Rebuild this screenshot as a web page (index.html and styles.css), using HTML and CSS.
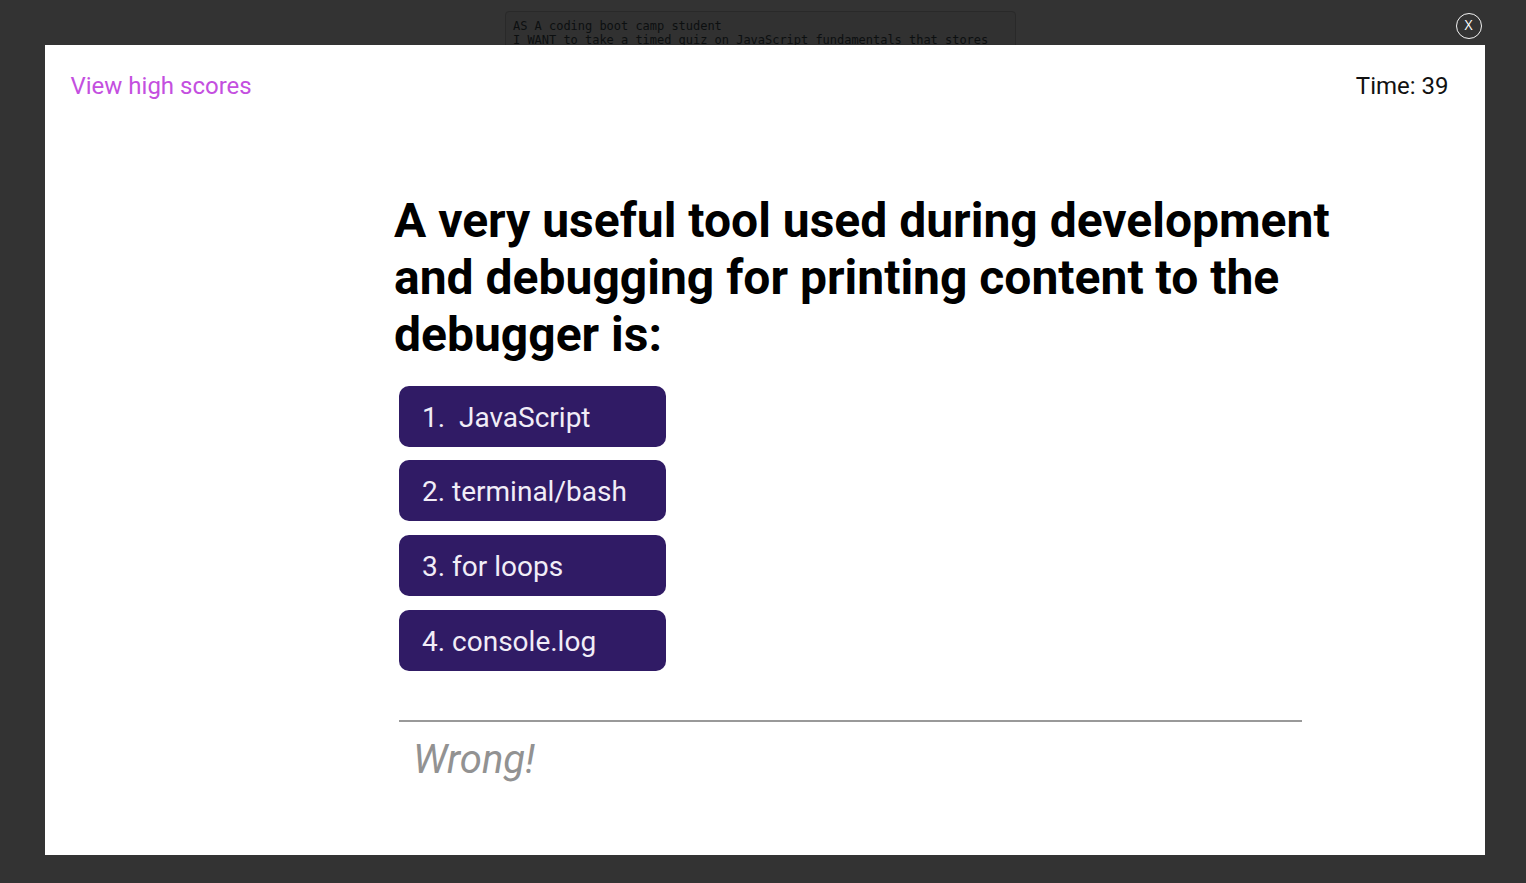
FILE: index.html
```
<!DOCTYPE html>
<html lang="en">
<head>
<meta charset="utf-8">
<title>Code Quiz</title>
<link rel="stylesheet" href="styles.css">
</head>
<body>
<div class="page">
<pre class="story">AS A coding boot camp student
I WANT to take a timed quiz on JavaScript fundamentals that stores
high scores</pre>
</div>
<div class="overlay">
  <div class="toolbar"><button class="close" aria-label="Close"><span class="close-mark">X</span></button></div>
  <main class="modal">
    <header class="topbar">
      <a class="scores">View high scores</a>
      <span class="timer">Time: 39</span>
    </header>
    <section class="quiz">
      <h1 class="question">A very useful tool used during development<br>and debugging for printing content to the<br>debugger is:</h1>
      <div class="answers">
        <button class="answer">1.&nbsp; JavaScript</button>
        <button class="answer">2. terminal/bash</button>
        <button class="answer">3. for loops</button>
        <button class="answer">4. console.log</button>
      </div>
      <p class="feedback">Wrong!</p>
    </section>
  </main>
</div>
</body>
</html>
```
FILE: styles.css
```
* { box-sizing: border-box; }
body {
  margin: 0;
  height: 883px;
  overflow: hidden;
  background: #333;
  font-family: Roboto, "Liberation Sans", sans-serif;
}
.page { padding: 11px 0 0 505px; }
.story {
  width: 511px;
  height: 100px;
  margin: 0;
  padding: 7px;
  border: 1px solid #292929;
  border-radius: 4px;
  background: #313131;
  color: #0c0f10;
  font: 12px/14px "DejaVu Sans Mono", monospace;
  letter-spacing: -0.025px;
}
.overlay {
  position: absolute;
  inset: 0;
  padding-left: 45px;
}
.toolbar {
  display: flex;
  justify-content: flex-end;
  width: 1440px;
  height: 45px;
  padding: 13px 3px 0 0;
}
.close {
  width: 26px;
  height: 26px;
  padding: 0 1px 2px 0;
  border: 1px solid #f4f4f4;
  border-radius: 50%;
  background: none;
  color: #fff;
  font: 14px/22px "Open Sans", sans-serif;
}
.close-mark { display: block; }
.modal {
  width: 1440px;
  height: 810px;
  background: #fff;
}
.topbar {
  display: flex;
  justify-content: space-between;
  padding: 27px 36.5px 0 25.5px;
  font-size: 24px;
  line-height: 28px;
}
.scores { color: #c44fdf; }
.timer { color: #111; }
.quiz { padding: 92px 0 0 349px; }
.question {
  margin: 0;
  color: #000;
  font-size: 48px;
  line-height: 57px;
  font-weight: 700;
  white-space: nowrap;
}
.answers {
  display: flex;
  flex-direction: column;
  gap: 13.8px;
  padding: 22.5px 0 0 5px;
}
.answer {
  width: 267px;
  height: 61px;
  padding: 2px 0 0 23px;
  border: 0;
  border-radius: 10px;
  background: #301b65;
  color: #f1edf7;
  font: 28px/33px Roboto, sans-serif;
  text-align: left;
}
.feedback {
  width: 903px;
  margin: 49px 0 0 5px;
  padding: 14px 0 0 14px;
  border-top: 2px solid #999;
  color: #929292;
  font-size: 40px;
  line-height: 47px;
  font-style: italic;
}
```
